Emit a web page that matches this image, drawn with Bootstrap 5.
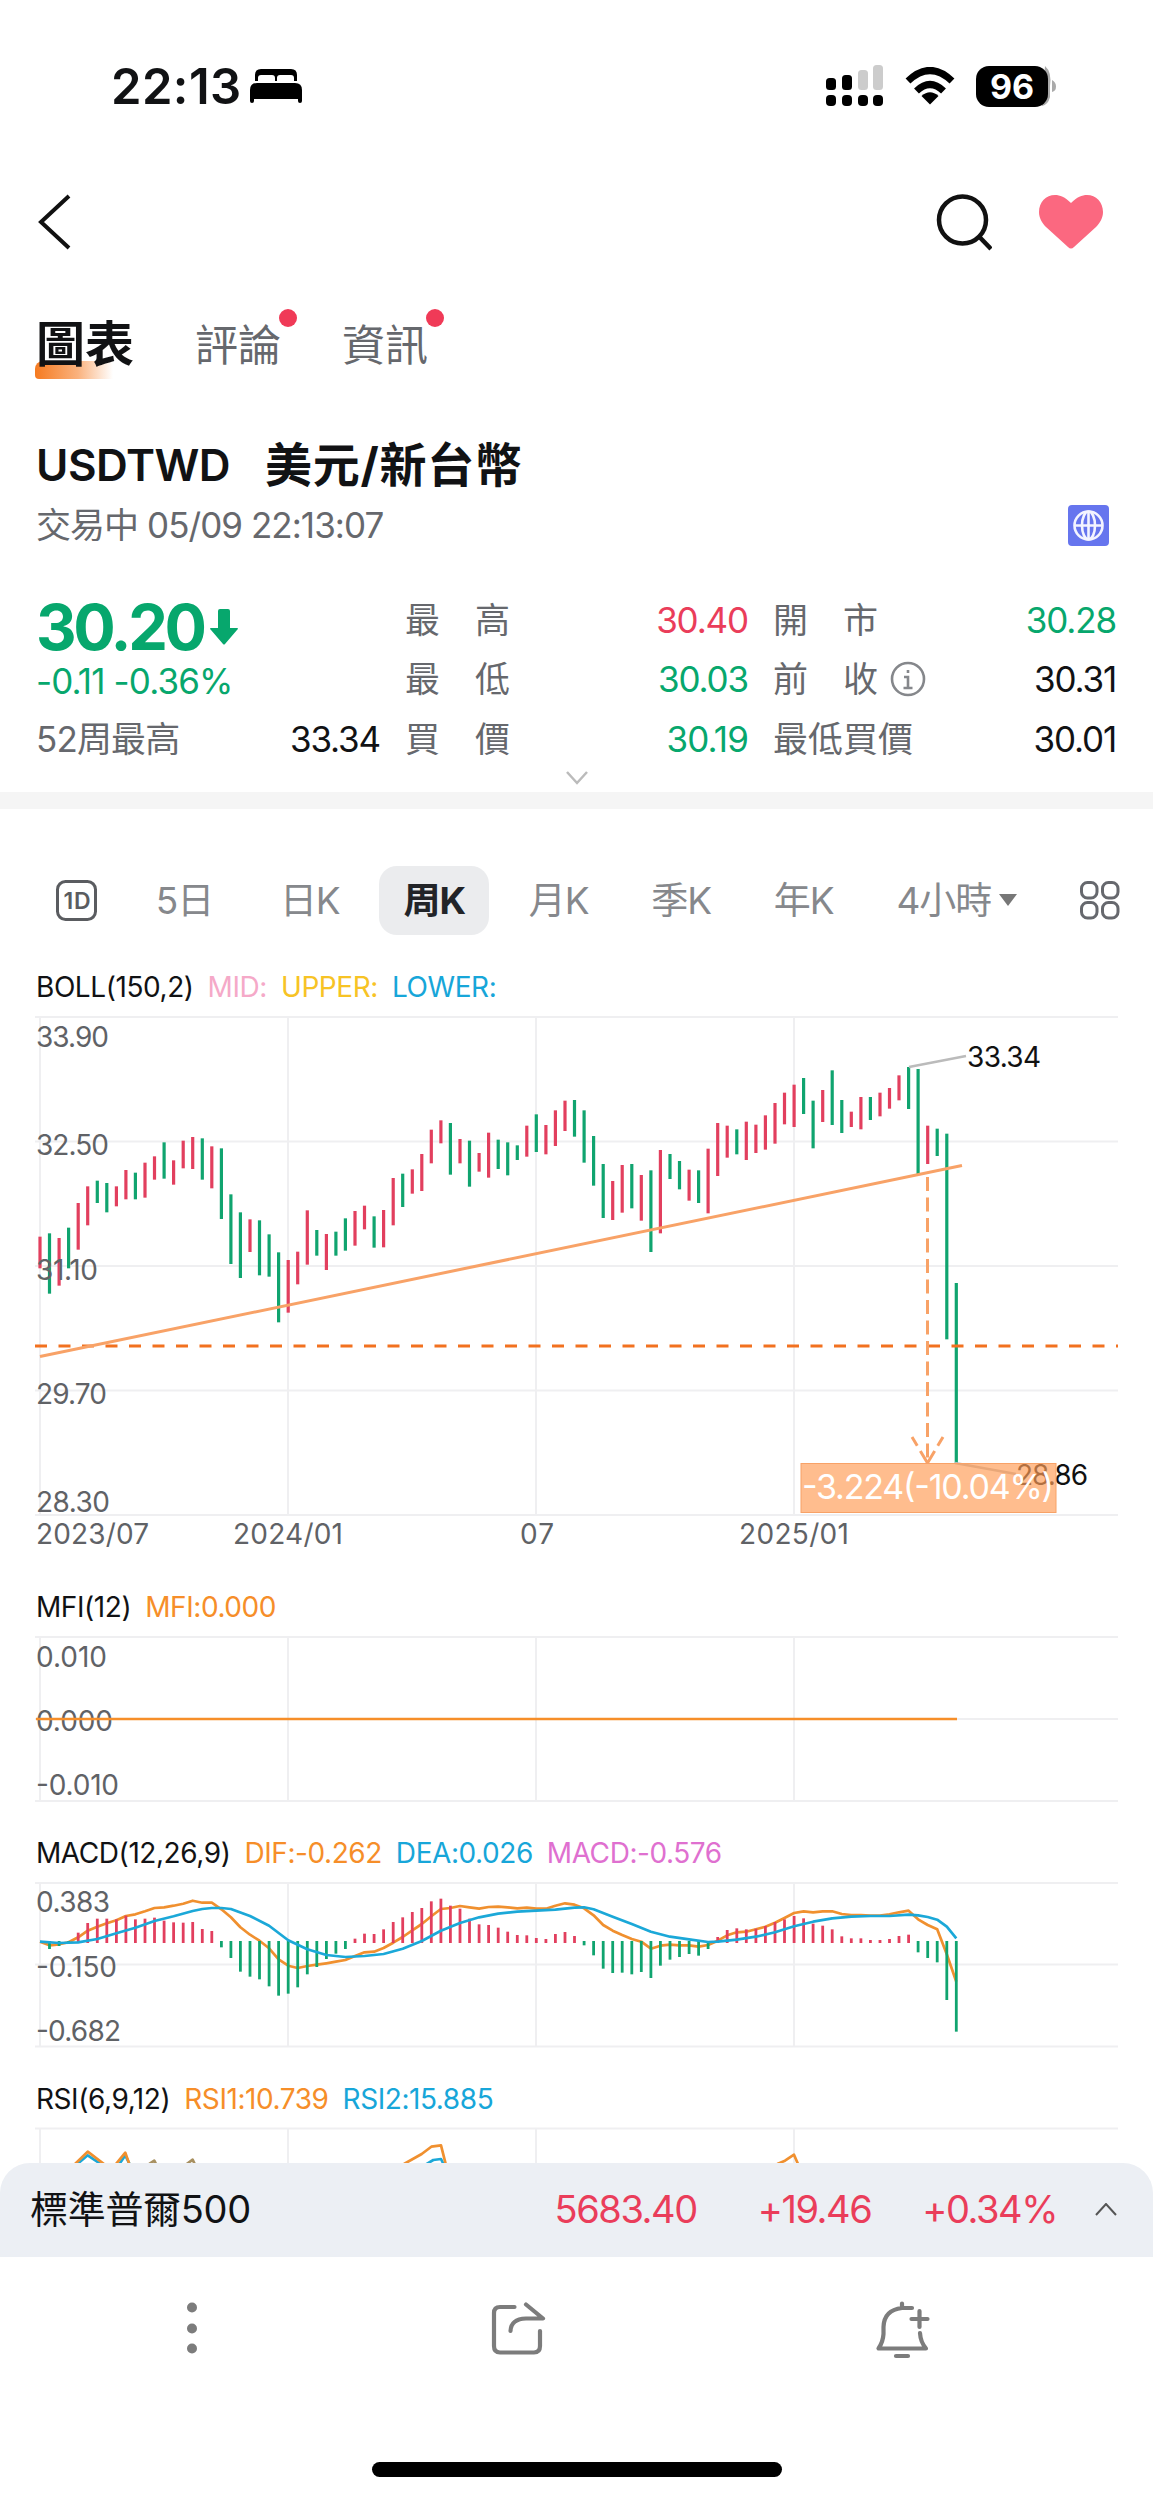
<!DOCTYPE html>
<html lang="zh-Hant">
<head>
<meta charset="utf-8">
<meta name="viewport" content="width=device-width, initial-scale=1">
<title>USDTWD 美元/新台幣</title>
<link href="https://cdn.jsdelivr.net/npm/bootstrap@5.3.0/dist/css/bootstrap.min.css" rel="stylesheet">
<script src="https://cdn.jsdelivr.net/npm/bootstrap@5.3.0/dist/js/bootstrap.bundle.min.js"></script>
<style>
  :root { --up:#ea3d5a; --down:#07a76d; --ink:#111214; --dim:#66686d; --orange:#f68e29; --blue:#17a6d9; }
  body { font-family: Inter, "Noto Sans CJK TC", sans-serif; color: var(--ink); background:#fff; width:1153px; height:2500px; overflow:hidden; }
  svg { display:block; flex:none; }
  span { white-space:nowrap; }
  .up { color:var(--up); } .down { color:var(--down); } .dim { color:var(--dim); }
  .status-row { height:172px; padding:0 96px 0 111px; }
  .clock { font-size:49px; font-weight:600; letter-spacing:.4px; line-height:1; }
  .wifi, .battery { margin-left:21px; }
  .top-row { height:100px; padding:0 50px 0 36px; }
  .heart { margin-left:47px; }
  .tab-row { height:146px; margin-bottom:17px; padding-left:36px; gap:61px; font-size:43px; }
  .tab-row .nav-link { padding:0; color:var(--dim); line-height:60px; position:relative; }
  .tab-row .nav-link.active { color:var(--ink); font-weight:700; font-size:49px; z-index:0; }
  .tab-row .nav-link.active::before { content:""; position:absolute; left:-1px; top:46px; width:78px; height:18px; z-index:-1; border-radius:8px 0 0 4px; background:linear-gradient(90deg,#f57a20,#fab27e 55%,#fff); }
  .red-dot { position:absolute; width:18px; height:18px; border-radius:50%; background:#f03a57; right:-16px; top:-6px; }
  .sym-row { height:60px; padding-left:36px; gap:35px; line-height:60px; font-weight:600; font-size:44px; letter-spacing:-.5px; }
  .sym-name { font-size:47px; font-weight:700; letter-spacing:.7px; }
  .time-row { height:61px; padding:0 44px 0 36px; font-size:35px; letter-spacing:-.95px; }
  .stats { display:grid; grid-template-columns:344px 343px 343px; column-gap:25px; grid-auto-rows:59.6px; margin-top:34px; padding-left:36px; font-size:35px; }
  .num { letter-spacing:-1.15px; }
  .num-s { letter-spacing:-.85px; }
  .last-price { font-size:63px; font-weight:700; line-height:1; letter-spacing:-3.4px; }
  .arrow { margin-left:6px; }
  .info { margin-left:12px; }
  .fold { height:23px; padding-top:2px; }
  .band { height:17px; background:#f5f5f5; }
  .span-row { height:69px; margin-top:57px; padding:0 33px 0 56px; font-size:37px; letter-spacing:-1px; color:#86888c; }
  .span-on { height:69px; border-radius:18px; background:#ebecee; color:#222428; font-weight:700; padding:0 24px; margin:0 -23px; }
  .five { margin:0 4px 0 -4px; }
  .legend { height:40px; padding-left:36px; gap:14px; font-size:28px; line-height:40px; letter-spacing:-.43px; }
  .legend-first { margin-top:32px; }
  .c-mid { color:#f5a9c8; } .c-up { color:#f7c325; } .c-or { color:var(--orange); } .c-bl { color:var(--blue); } .c-vi { color:#df70d0; }
  .index-bar { height:94px; background:#eceff4; border-radius:30px 30px 0 0; padding:0 36px 0 30px; font-size:38px; letter-spacing:-.3px; }
  .index-bar .up { letter-spacing:-1.45px; margin-left:61px; }
  .index-bar .up ~ .up ~ .up { margin-left:51px; }
  .index-fold { margin-left:38px; }
  .home-bar { width:410px; height:15px; border-radius:8px; background:#000; margin-top:62px; }
  .axis { font-size:28px; fill:#606266; }
</style>
</head>
<body>
<header>
  <div class="status-row d-flex align-items-center">
    <span class="clock">22:13</span>
    <svg class="ms-2" width="52" height="36" viewBox="0 0 52 36"><path d="M5 13V7Q5 1 11 1H41Q47 1 47 7V13H44V10Q44 7 41 7H30Q27 7 27 10V13H25V10Q25 7 22 7H11Q8 7 8 10V13Z"/><path d="M0 22Q0 15 7 15H45Q52 15 52 22V33Q52 35 50 35T48 33V31H4V33Q4 35 2 35T0 33Z"/></svg>
    <div class="ms-auto d-flex align-items-center">
      <svg width="58" height="42" viewBox="0 0 58 42"><g fill="#ccc"><rect x="32" y="5" width="10" height="20" rx="3.5"/><rect x="47" width="10" height="25" rx="3.5"/></g><rect y="13" width="10" height="12" rx="3.5"/><rect x="16" y="10" width="10" height="15" rx="3.5"/><rect y="30" width="10" height="11" rx="4"/><rect x="16" y="30" width="10" height="11" rx="4"/><rect x="32" y="30" width="10" height="11" rx="4"/><rect x="47" y="30" width="10" height="11" rx="4"/></svg>
      <svg class="wifi" width="50" height="38" viewBox="0 0 50 38"><g fill="none" stroke="#000" stroke-width="7"><path d="M3 14Q25-7 47 14"/><path d="M11.500 24Q25 11 38.500 24"/></g><path d="M16.500 29Q25 21.500 33.500 29L25 37.500Z"/></svg>
      <svg class="battery" width="81" height="41" viewBox="0 0 81 41"><path fill="#aaa" d="M69 0Q76 6 74 20V31Q72 39 66 40M76 14Q80 16 80 20.500T76 26Z"/><rect width="72" height="41" rx="13"/><text x="14" y="32.500" fill="#fff" font-size="34" font-weight="700" textLength="44">96</text></svg>
    </div>
  </div>
  <div class="top-row d-flex align-items-center">
    <svg width="36" height="56" viewBox="0 0 36 56" fill="none" stroke="#111" stroke-width="4"><path d="M33 2L5 28L33 54"/></svg>
    <svg class="ms-auto" width="58" height="58" viewBox="0 0 58 58" fill="none" stroke="#111" stroke-width="4.500"><circle cx="28.500" cy="27" r="23.500"/><path d="M45 43.500L57 56"/></svg>
    <svg class="heart" width="64" height="56" viewBox="0 0 64 56"><path fill="#fb6880" d="M32 9C26 3 21 1 16 1C7 1 0 8 0 18C0 24 3 29 7 33L29 53Q32 56 35 53L57 33C61 29 64 24 64 18C64 8 57 1 48 1C43 1 38 3 32 9Z"/></svg>
  </div>
  <nav class="tab-row nav align-items-center">
    <a class="nav-link active">圖表</a>
    <a class="nav-link">評論<i class="red-dot"></i></a>
    <a class="nav-link">資訊<i class="red-dot"></i></a>
  </nav>
</header>
<main>
  <div class="sym-row d-flex"><span>USDTWD</span><span class="sym-name">美元/新台幣</span></div>
  <div class="time-row d-flex align-items-center justify-content-between">
    <span class="dim">交易中 05/09 22:13:07</span>
    <svg width="41" height="41" viewBox="0 0 41 41"><rect width="41" height="41" rx="4" fill="#6675ee"/><g fill="none" stroke="#f3f4ff" stroke-width="2.600"><circle cx="20.500" cy="20.500" r="14"/><ellipse cx="20.500" cy="20.500" rx="6.500" ry="14"/><path d="M6.500 20.500H34.500M20.500 6.500V34.500"/></g></svg>
  </div>
  <div class="stats">
    <div class="d-flex align-items-center down pt-3"><span class="last-price">30.20</span><svg class="arrow" width="28" height="37" viewBox="0 0 28 37"><path fill="#07a76d" d="M8 2Q8 0 10 0H18Q20 0 20 2V19H27Q29 19 27 21L15 35Q14 36 13 35L1 21Q-1 19 1 19H8Z"/></svg></div>
    <div class="d-flex align-items-center justify-content-between"><span class="dim">最　高</span><span class="up num">30.40</span></div>
    <div class="d-flex align-items-center justify-content-between"><span class="dim">開　市</span><span class="down num">30.28</span></div>
    <div class="d-flex align-items-center down pt-1"><span class="num-s">-0.11 -0.36%</span></div>
    <div class="d-flex align-items-center justify-content-between"><span class="dim">最　低</span><span class="down num">30.03</span></div>
    <div class="d-flex align-items-center justify-content-between"><span class="dim d-flex align-items-center">前　收<svg class="info" width="36" height="38" viewBox="0 0 36 38" fill="none" stroke="#85878b" stroke-width="2.600"><circle cx="18" cy="19" r="16"/><path d="M14 17H18V27M13.500 28H22.500M18 10V13"/></svg></span><span class="num">30.31</span></div>
    <div class="d-flex align-items-center justify-content-between"><span class="dim num-s">52周最高</span><span class="num">33.34</span></div>
    <div class="d-flex align-items-center justify-content-between"><span class="dim">買　價</span><span class="down num-s">30.19</span></div>
    <div class="d-flex align-items-center justify-content-between"><span class="dim">最低買價</span><span class="num">30.01</span></div>
  </div>
  <div class="fold d-flex justify-content-center"><svg width="22" height="14" viewBox="0 0 22 14" fill="none" stroke="#bbb" stroke-width="2.500"><path d="M1 1L11 12L21 1"/></svg></div>
  <div class="band"></div>
  <div class="span-row d-flex align-items-center justify-content-between">
    <svg width="41" height="41" viewBox="0 0 41 41"><rect x="1.500" y="1.500" width="38" height="38" rx="8" fill="none" stroke="#5a5c60" stroke-width="3"/><text x="7.500" y="29" font-size="23" font-weight="600" fill="#5a5c60" textLength="26">1D</text></svg>
    <span class="five">5日</span><span>日K</span>
    <span class="span-on d-flex align-items-center">周K</span>
    <span>月K</span><span>季K</span><span>年K</span>
    <span class="d-flex align-items-center">4小時<svg class="ms-2" width="18" height="12"><path fill="#777" d="M0 0H18L9 12Z"/></svg></span>
    <svg width="40" height="39" viewBox="0 0 40 39" fill="none" stroke="#66686d" stroke-width="3"><rect x="1.500" y="1.500" width="15.500" height="15.500" rx="6"/><rect x="22.500" y="1.500" width="15.500" height="15.500" rx="6"/><rect x="1.500" y="21.500" width="15.500" height="15.500" rx="6"/><rect x="22.500" y="21.500" width="15.500" height="15.500" rx="6"/></svg>
  </div>
  <div class="legend legend-first d-flex"><span>BOLL(150,2)</span><span class="c-mid">MID:</span><span class="c-up">UPPER:</span><span class="c-bl">LOWER:</span></div>
  <svg id="kline" width="1153" height="580" viewBox="0 1007 1153 580"></svg>
  <div class="legend d-flex"><span>MFI(12)</span><span class="c-or">MFI:0.000</span></div>
  <svg id="mfi" width="1153" height="206" viewBox="0 1627 1153 206"></svg>
  <div class="legend d-flex"><span>MACD(12,26,9)</span><span class="c-or">DIF:-0.262</span><span class="c-bl">DEA:0.026</span><span class="c-vi">MACD:-0.576</span></div>
  <svg id="macd" width="1153" height="206" viewBox="0 1873 1153 206"></svg>
  <div class="legend d-flex"><span>RSI(6,9,12)</span><span class="c-or">RSI1:10.739</span><span class="c-bl">RSI2:15.885</span></div>
  <svg id="rsi" width="1153" height="44" viewBox="0 2119 1153 44"></svg>
</main>
<footer>
  <div class="index-bar d-flex align-items-center">
    <span class="me-auto">標準普爾500</span>
    <span class="up">5683.40</span><span class="up">+19.46</span><span class="up">+0.34%</span>
    <svg class="index-fold" width="22" height="14" viewBox="0 0 22 14" fill="none" stroke="#555" stroke-width="2"><path d="M1 12L11 1L21 12"/></svg>
  </div>
  <svg width="1153" height="143" viewBox="0 2257 1153 143" fill="none" stroke="#7c7c7c" stroke-width="4.200" stroke-linecap="round" stroke-linejoin="round">
    <g fill="#7c7c7c" stroke="none"><circle cx="192" cy="2307.500" r="5"/><circle cx="192" cy="2328.500" r="5"/><circle cx="192" cy="2348.500" r="5"/></g>
    <path d="M514.500 2307H500Q494 2307 494 2313V2346Q494 2352.500 500 2352.500H534Q540 2352.500 540 2346V2331M526 2304.500L543 2318.500H526Q511 2319 510.500 2331"/>
    <path d="M902 2303.500V2308M912 2308H902Q884 2310 883.500 2327V2334Q883 2342 878.500 2348.500H926Q920.500 2342 920 2333M919.500 2311V2327M911.500 2319H927.500M896 2356H908"/>
  </svg>
  <div class="home-bar mx-auto"></div>
</footer>
<script>
  // Weekly bars: colour flag, top and bottom, in thirds of a pixel below y = 1000
  const bars = `r710-805 g700-881 r714-857 g683-805 r609-749 r559-676 g542-609 g549-637 r559-619 r510-598 g518-598 r488-593 r469-539 g427-536 r481-554 r422-505 r411-507 g415-539 r439-565 g445-657 g583-792 g637-834 r658-756 g661-826 g703-830 g757-967 r780-938 r755-853 r631-794 g690-767 r702-810 g695-767 g655-752 r633-737 r617-688 g649-743 r630-742 r534-676 g521-621 r508-581 r462-573 r389-490 r361-430 g369-524 r417-490 g422-560 r459-515 r398-533 g419-507 g427-526 g436-480 r377-470 g343-456 r375-463 r331-438 r302-393 g300-410 g331-488 g408-557 g492-654 r543-660 r495-638 g492-625 r525-662 g511-756 r450-700 g462-537 g483-568 r509-602 g511-609 r446-640 r369-528 r377-473 g388-463 r365-480 r374-459 r346-449 r309-431 r278-373 r254-381 g234-342 g302-445 r270-366 g211-375 g300-399 r335-381 r291-388 g291-360 r278-349 r264-326 r226-301 g201-327 g207-523 r377-492 g386-468 g401-1018 g849-1391`.split(' ');
  // MACD histogram ends and the two lines, in thirds of a pixel below y = 1840
  const hist = [305,327,318,309,278,249,236,236,238,227,238,236,233,242,247,248,246,267,273,322,354,395,410,418,439,467,461,442,403,381,357,341,327,296,281,282,268,246,232,216,204,184,176,197,206,236,253,255,263,275,285,286,294,297,282,276,288,316,346,386,399,398,403,396,414,377,359,351,342,347,327,291,270,265,268,266,258,246,238,228,235,251,257,268,289,295,295,300,300,297,288,284,337,354,367,480,575];
  const dif = [305,316,313,307,292,272,260,250,241,228,223,214,204,202,197,191,182,188,188,208,232,262,284,302,325,358,377,384,378,374,370,365,360,348,337,335,324,308,291,271,252,229,207,204,198,202,206,201,200,202,205,203,206,206,197,190,194,205,226,255,272,285,297,305,326,317,314,316,316,320,315,302,286,277,275,268,260,248,234,219,214,217,214,214,222,225,225,227,227,223,217,212,238,255,268,343,425];
  const dea = {0:305,2:309,4:307,6:297,8:280,10:263,12:243,14:229,16:213,17:207,18:204,19:204,20:207,22:228,24:257,26:301,28:328,30:345,32:351,34:348,36:342,38:326,40:303,42:272,44:249,46:232,48:221,50:215,52:212,54:209,56:203,57:202,58:208,60:230,62:252,64:275,66:290,68:298,70:306,71:305,73:299,75:290,77:277,79:259,81:245,83:235,85:230,87:228,89:228,91:224,92:226,93:231,94:239,95:260,96:295};
  const X = i => (40 + i * 9.545).toFixed(1), UP = '#e23f5e', DN = '#10a46f';
  const ln = (x1,y1,x2,y2,c,w,e='') => `<path d="M${x1} ${y1}L${x2} ${y2}" stroke="${c}" stroke-width="${w}" fill="none" ${e}/>`;
  const tx = (x,y,s,w,e='class="axis"') => `<text x="${x}" y="${y}" textLength="${w}" ${e}>${s}</text>`;
  const grid = (t,b,rows) => rows.map(y => ln(35,y,1118,y,'#efeff1',2)).join('') + [40,288,536,794].map(x => ln(x,t,x,b,'#efeff1',2)).join('');
  const poly = (p,c) => `<polyline points="${p}" fill="none" stroke="${c}" stroke-width="2.7" stroke-linejoin="round"/>`;
  const blk = 'font-size="28" fill="#111"';

  kline.innerHTML = grid(1017,1515,[1017,1141.5,1266,1390.5,1515])
    + bars.map((b,i) => { const [a,z] = b.slice(1).split('-'); return ln(X(i),1000+a/3,X(i),1000+z/3,b[0]=='r'?UP:DN,3.2); }).join('')
    + ln(35,1346,1118,1346,'#f2711f',3,'stroke-dasharray="12 11.500"')
    + tx(36,1046.5,'33.90',73) + tx(36,1155,'32.50',73) + tx(36,1279.5,'31.10',62) + tx(36,1404,'29.70',71) + tx(36,1512,'28.30',74)
    + ln(909,1067,966,1056,'#bbb',2.5) + tx(967,1066.5,'33.34',74,blk) + ln(955,1463,1016,1474,'#bbb',2.5) + tx(1016,1485,'28.86',72,blk)
    + ln(40,1356.5,962,1165.5,'#f8a267',3)
    + ln(927.5,1177,927.5,1463,'#f8a267',3,'stroke-dasharray="14 6.500"')
    + ln(927.5,1463,912,1437,'#f8a267',3,'stroke-dasharray="14 6"') + ln(927.5,1463,943,1437,'#f8a267',3,'stroke-dasharray="14 6"')
    + '<rect x="801" y="1463.5" width="255" height="49" fill="#ff9d58" fill-opacity=".68" stroke="#f8a267"/>'
    + tx(802,1498.5,'-3.224(-10.04%)',252,'font-size="34" fill="#fff"')
    + tx(36,1544,'2023/07',113) + tx(233,1544,'2024/01',110) + tx(520,1544,'07',34) + tx(739,1544,'2025/01',110);

  mfi.innerHTML = grid(1637,1801,[1637,1719,1801]) + tx(36,1666.5,'0.010',71) + tx(36,1731,'0.000',77) + tx(36,1795,'-0.010',83)
    + ln(36,1719,957,1719,'#f68e29',2.7);

  macd.innerHTML = grid(1883,2046.5,[1883,1964.5,2046.5]) + tx(36,1912,'0.383',74) + tx(36,1976.5,'-0.150',81) + tx(36,2041,'-0.682',85)
    + poly(dif.map((v,i) => X(i)+','+(1840+v/3).toFixed(1)).join(' '),'#f0902f')
    + hist.map((v,i) => ln(X(i), 1840+(v<306?309:303)/3, X(i), 1840+v/3, v<306?UP:DN, 2.8)).slice(1).join('')
    + poly(Object.keys(dea).map(i => X(+i)+','+(1840+dea[i]/3).toFixed(1)).join(' '),'#1ba8d8');

  const rp = (s,c,ox=0) => poly(s.split(' ').map(p => { const [x,y]=p.split(','); return (ox+x/3).toFixed(1)+','+(1840+y/3).toFixed(1); }).join(' '),c);
  rsi.innerHTML = grid(2128.5,2163,[2128.5])
    + rp('232,972 263,946 302,972','#1ba8d8') + rp('356,975 376,946 390,975','#1ba8d8') + rp('1275,975 1300,960 1323,957 1332,975','#1ba8d8')
    + rp('225,972 263,935 312,972','#f0902f') + rp('348,972 376,938 388,972','#f0902f') + rp('448,972 463,962 468,972','#a89060') + rp('560,972 578,959 584,972','#a89060')
    + rp('1212,972 1265,942 1294,920 1323,916 1337,972','#f0902f') + rp('832,972 855,962 882,944 894,972','#f0902f',500);
</script>
</body>
</html>
